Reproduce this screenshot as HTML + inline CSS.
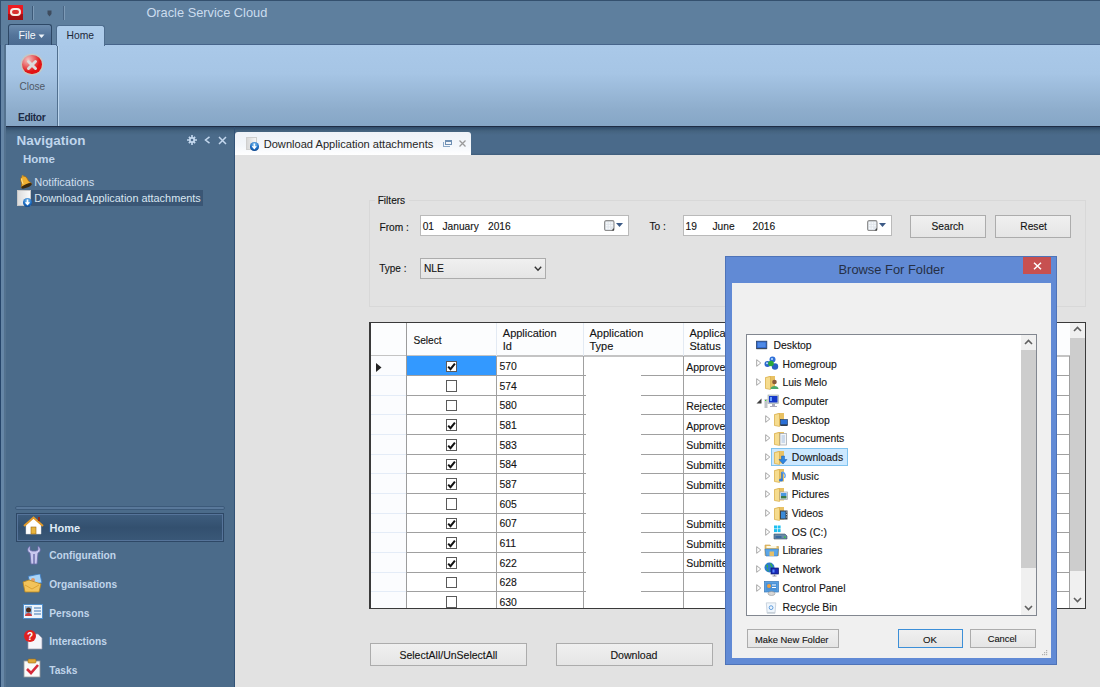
<!DOCTYPE html>
<html><head><meta charset="utf-8">
<style>
*{margin:0;padding:0;box-sizing:border-box}
html,body{width:1100px;height:687px;overflow:hidden;background:#e2e2e2;font-family:"Liberation Sans",sans-serif;font-size:11px;color:#111}
.a{position:absolute}
.t{position:absolute;white-space:nowrap;line-height:1}
</style></head><body>
<div class="a" style="left:0.00px;top:0.00px;width:1100.00px;height:45.00px;background:#5e7f9e;border-top:1px solid #34506e"></div>
<div class="a" style="left:0.00px;top:0.00px;width:1.00px;height:45.00px;background:#34506e"></div>
<div class="a" style="left:8.00px;top:5.00px;width:15.00px;height:15.00px;background:linear-gradient(#ee1c24 0%,#e3141b 58%,#a80f14 58%,#a10d12 100%)"></div>
<div class="a" style="left:9.80px;top:7.80px;width:11.40px;height:8.00px;border:2.2px solid #f6ece6;border-radius:4px;background:#d83030"></div>
<div class="a" style="left:32.00px;top:6.00px;width:1.00px;height:14.00px;background:#3d5a78;box-shadow:1px 0 0 #7d9ab6"></div>
<svg class="a" style="left:47.00px;top:10.00px" width="5" height="7"><path d="M0.5 0.5h4v3.5l-2 2.5l-2-2.5z" fill="#3e4c5e"/></svg>
<div class="a" style="left:63.00px;top:6.00px;width:1.00px;height:14.00px;background:#4a6684;box-shadow:1px 0 0 #7d9ab6"></div>
<div class="t" style="left:146.40px;top:7.16px;font-size:12.8px;color:#cbdcee;font-weight:400;">Oracle Service Cloud</div>
<div class="a" style="left:5.00px;top:44.00px;width:1095.00px;height:83.00px;background:linear-gradient(#aac9e9 0%,#a6c5e5 35%,#8eadcc 80%,#86a6c6 100%);border-top:1px solid #46648a;border-left:1px solid #3e5b7c;border-bottom:1px solid #1e2c44"></div>
<div class="a" style="left:8.00px;top:24.00px;width:44.00px;height:21.00px;border:1px solid #2d4866;border-bottom:none;border-radius:3px 3px 0 0;background:linear-gradient(#6c8cae,#54749a 50%,#4a6a90)"></div>
<div class="t" style="left:18.60px;top:30.03px;font-size:10.6px;color:#f4f8fc;font-weight:400;">File</div>
<svg class="a" style="left:37.50px;top:33.50px" width="7" height="5"><path d="M0.5 0.5h6l-3 3.5z" fill="#eef4fa"/></svg>
<div class="a" style="left:56.00px;top:24.50px;width:48.50px;height:21.50px;border:1px solid #4e6d8e;border-bottom:none;border-radius:3px 3px 0 0;background:linear-gradient(#aecdeb,#aac9e9)"></div>
<div class="t" style="left:66.50px;top:30.58px;font-size:10.3px;color:#1d2838;font-weight:400;">Home</div>
<div class="a" style="left:57.00px;top:46.00px;width:1.00px;height:80.00px;background:#51708f;box-shadow:1px 0 0 #bcd6ee"></div>
<div class="a" style="left:22.40px;top:54.50px;width:19.60px;height:19.60px;border-radius:50%;background:radial-gradient(circle at 30% 25%,#f4c0c0 0%,#ea7070 30%,#e01515 60%,#ee0808 100%);box-shadow:0 0 0 1.3px #c8c8c0"></div>
<svg class="a" style="left:22.40px;top:54.50px" width="20" height="20"><path d="M6.5 6.5 L13.5 13.5 M13.5 6.5 L6.5 13.5" stroke="#dcdcdc" stroke-width="3" stroke-linecap="round"/></svg>
<div class="t" style="left:19.40px;top:82.05px;font-size:10.1px;color:#4f5866;font-weight:400;">Close</div>
<div class="t" style="left:18.00px;top:113.17px;font-size:10.2px;color:#1c2a44;font-weight:700;letter-spacing:-0.35px">Editor</div>
<div class="a" style="left:0.00px;top:45.00px;width:6.00px;height:642.00px;background:linear-gradient(90deg,#26456a 0,#26456a 1px,#6686a6 1px,#6686a6 4.5px,#54728f 4.5px)"></div>
<div class="a" style="left:6.00px;top:127.00px;width:229.00px;height:560.00px;background:linear-gradient(#2f4a69 0px,#44637f 4px,#4b6b8a 8px)"></div>
<div class="a" style="left:234.00px;top:127.00px;width:1.00px;height:560.00px;background:#325276"></div>
<div class="t" style="left:16.60px;top:134.37px;font-size:13.5px;color:#bfd5ec;font-weight:700;">Navigation</div>
<svg class="a" style="left:187.00px;top:135.00px" width="10" height="10"><g fill="#c4d8ee"><circle cx="5" cy="5" r="3"/><path d="M4.2 0h1.6v10h-1.6zM0 4.2h10v1.6h-10z"/><path d="M1.3 2.4l1.1-1.1 6.3 6.3-1.1 1.1zM7.6 1.3l1.1 1.1-6.3 6.3-1.1-1.1z"/></g><circle cx="5" cy="5" r="1.3" fill="#4a6a8b"/></svg>
<svg class="a" style="left:204.00px;top:136.00px" width="7" height="8"><path d="M5.5 0.8 L1.5 4 L5.5 7.2" stroke="#c4d8ee" stroke-width="1.5" fill="none"/></svg>
<svg class="a" style="left:217.50px;top:136.00px" width="9" height="9"><path d="M1 1 L8 8 M8 1 L1 8" stroke="#c4d8ee" stroke-width="1.5"/></svg>
<div class="t" style="left:23.00px;top:154.07px;font-size:11.5px;color:#bfd5ec;font-weight:700;">Home</div>
<svg class="a" style="left:17.00px;top:174.00px" width="15" height="16"><g transform="rotate(-22 8 8)"><path d="M8 2 C5 2 4.5 5 4.5 8 L2.5 12 L13.5 12 L11.5 8 C11.5 5 11 2 8 2Z" fill="#f0b030" stroke="#a86a10" stroke-width="0.7"/><path d="M6 3.5 C5.5 5 5.5 7 5.5 9" stroke="#fde08a" stroke-width="1.2" fill="none"/><ellipse cx="8" cy="12.2" rx="5.5" ry="1.8" fill="#3a2a10"/><circle cx="8" cy="1.8" r="1" fill="#d89a20"/></g></svg>
<div class="t" style="left:34.30px;top:176.99px;font-size:11px;color:#d0dfee;font-weight:400;">Notifications</div>
<div class="a" style="left:17.00px;top:190.00px;width:186.00px;height:16.00px;background:#3a5675"></div>
<div class="a" style="left:17.00px;top:190.00px;width:14.00px;height:16.00px;background:linear-gradient(90deg,#dcdcdc,#fafafa);border:1px solid #c8c8c8"></div>
<div class="a" style="left:22.50px;top:198.00px;width:9.00px;height:9.00px;border-radius:50%;background:radial-gradient(circle at 50% 30%,#8ccaf5,#1a6bc2 55%,#082a60)"></div>
<svg class="a" style="left:22.50px;top:198.00px" width="9" height="9"><path d="M4.5 1.5v4.5M2.6 4.2L4.5 6.5L6.4 4.2" stroke="#fff" stroke-width="1.4" fill="none"/></svg>
<div class="t" style="left:34.30px;top:193.07px;font-size:10.9px;color:#d9e6f2;font-weight:400;">Download Application attachments</div>
<div class="a" style="left:15.00px;top:506.00px;width:210.00px;height:4.00px;background:#59789a;border:1px solid #3c5a7a;border-radius:2px"></div>
<div class="a" style="left:16.00px;top:513.00px;width:208.00px;height:28.60px;border:1px solid #2e4866;box-shadow:inset 0 0 0 1px #56749a;background:linear-gradient(#3e5d7e,#33506f 50%,#3a5878)"></div>
<svg class="a" style="left:23.00px;top:516.00px" width="21" height="19"><path d="M3 9 L10.5 2 L18 9 L18 18 L3 18Z" fill="#fff" stroke="#d8d8d8" stroke-width="0.5"/><path d="M1 10 L10.5 1.5 L20 10" stroke="#e29a2a" stroke-width="2" fill="none"/><rect x="8" y="11" width="5" height="7" fill="#e8b43c" stroke="#9b6a14" stroke-width="0.6"/><rect x="15" y="1" width="2" height="4" fill="#8a2b1a"/></svg>
<div class="t" style="left:49.50px;top:523.19px;font-size:11px;color:#dfeaf5;font-weight:700;">Home</div>
<svg class="a" style="left:26.00px;top:545.00px" width="16" height="20"><path d="M4 1 C1 3 1 7 4 8 L5 19 L11 19 L12 8 C15 7 15 3 12 1 L12 5 L10 6 L6 6 L4 5Z" fill="#c9c8ef" stroke="#6a6aa8" stroke-width="0.8"/><rect x="7.3" y="9" width="1.4" height="10" fill="#6a6aa8"/></svg>
<div class="t" style="left:49.20px;top:551.47px;font-size:10.2px;color:#c0d5ea;font-weight:700;">Configuration</div>
<svg class="a" style="left:22.00px;top:574.00px" width="21" height="19"><rect x="7" y="1" width="12" height="9" fill="#a9d4f8" stroke="#3d7cc0" stroke-width="0.8" transform="rotate(-12 13 5)"/><circle cx="11" cy="6" r="2" fill="#e09a6a"/><path d="M1 8 L7 6 L19 10 L17 18 L3 18Z" fill="#f2c35a" stroke="#b9861e" stroke-width="0.8"/><path d="M3 11 L10 15 L17 11" stroke="#d69a2a" stroke-width="0.8" fill="none"/></svg>
<div class="t" style="left:49.20px;top:580.05px;font-size:10.1px;color:#c0d5ea;font-weight:700;">Organisations</div>
<svg class="a" style="left:23.00px;top:603.50px" width="20" height="15"><rect x="0.5" y="0.5" width="19" height="14" fill="#eef4fb" stroke="#4f8dc9"/><rect x="2" y="2" width="7" height="10" fill="#8fb7df"/><circle cx="5.5" cy="6" r="2.5" fill="#4a2a18"/><path d="M2 12 C2 8 9 8 9 12Z" fill="#d43c3c"/><path d="M11 4h7M11 7h7M11 10h7" stroke="#3c76b4" stroke-width="1.2"/></svg>
<div class="t" style="left:49.20px;top:609.17px;font-size:10.2px;color:#c0d5ea;font-weight:700;">Persons</div>
<svg class="a" style="left:22.50px;top:630.00px" width="20" height="20"><path d="M5 4 L15 4 L19 8 L19 19 L5 19Z" fill="#f5f5fb" stroke="#9a9aaa" stroke-width="0.7"/><circle cx="7" cy="6" r="6" fill="#e02020"/><text x="7" y="10" font-size="10" font-weight="bold" fill="#fff" text-anchor="middle" font-family="Liberation Sans">?</text></svg>
<div class="t" style="left:49.20px;top:637.17px;font-size:10.2px;color:#c0d5ea;font-weight:700;">Interactions</div>
<svg class="a" style="left:23.00px;top:658.30px" width="19" height="20"><rect x="1" y="3" width="16" height="16" fill="#fafafa" stroke="#999" stroke-width="0.8"/><rect x="5" y="1" width="8" height="4" rx="1" fill="#e0a838" stroke="#9b6a14" stroke-width="0.6"/><path d="M4 11 L8 15 L15 7" stroke="#d62a3a" stroke-width="2.6" fill="none"/></svg>
<div class="t" style="left:49.20px;top:665.67px;font-size:10.2px;color:#c0d5ea;font-weight:700;">Tasks</div>
<div class="a" style="left:235.00px;top:127.00px;width:865.00px;height:28.00px;background:linear-gradient(#2f4a69 0px,#44637f 4px,#4a6a8a 8px,#4a6a8a 26px,#3e5c7b 28px)"></div>
<div class="a" style="left:235.00px;top:155.00px;width:865.00px;height:532.00px;background:#e2e2e2"></div>
<div class="a" style="left:235.00px;top:132.00px;width:236.00px;height:23.00px;border-radius:3px 3px 0 0;background:linear-gradient(#eef2f8,#f4f7fb 60%,#ffffff)"></div>
<div class="a" style="left:246.00px;top:137.00px;width:11.00px;height:13.00px;background:linear-gradient(90deg,#d8d8d8,#f6f6f6);border:1px solid #cfcfcf"></div>
<div class="a" style="left:250.00px;top:142.00px;width:8.50px;height:8.50px;border-radius:50%;background:radial-gradient(circle at 50% 30%,#8ccaf5,#1a6bc2 55%,#082a60)"></div>
<svg class="a" style="left:250.00px;top:142.00px" width="9" height="9"><path d="M4.3 1.5v4.5M2.4 4.2L4.3 6.5L6.2 4.2" stroke="#fff" stroke-width="1.3" fill="none"/></svg>
<div class="t" style="left:263.70px;top:138.90px;font-size:11.1px;color:#262626;font-weight:400;">Download Application attachments</div>
<div class="a" style="left:445.00px;top:140.00px;width:7.00px;height:5.00px;border:1.5px solid #6e8fb3;border-top-width:2px"></div>
<div class="a" style="left:443.00px;top:142.00px;width:7.00px;height:5.00px;border:1.5px solid #8aa8c8;border-top:none;border-right:none"></div>
<svg class="a" style="left:459.00px;top:140.00px" width="7" height="7"><path d="M0.5 0.5 L6.5 6.5 M6.5 0.5 L0.5 6.5" stroke="#9a9a9a" stroke-width="1.3"/></svg>
<div class="a" style="left:369.00px;top:200.00px;width:717.00px;height:107.00px;border:1px solid #d8d8d8"></div>
<div class="a" style="left:375.00px;top:193.00px;width:34.00px;height:12.00px;background:#e2e2e2"></div>
<div class="t" style="left:377.70px;top:196.15px;font-size:10.1px;color:#141414;font-weight:400;;-webkit-text-stroke:0.12px #141414">Filters</div>
<div class="t" style="left:379.50px;top:222.67px;font-size:10.2px;color:#141414;font-weight:400;;-webkit-text-stroke:0.12px #141414">From :</div>
<div class="a" style="left:420.00px;top:215.00px;width:209.00px;height:21.00px;background:#fff;border:1px solid #bababa"></div>
<div class="t" style="left:422.70px;top:221.57px;font-size:10.2px;color:#141414;font-weight:400;;-webkit-text-stroke:0.12px #141414">01</div>
<div class="t" style="left:442.50px;top:221.57px;font-size:10.2px;color:#141414;font-weight:400;;-webkit-text-stroke:0.12px #141414">January</div>
<div class="t" style="left:488.00px;top:221.57px;font-size:10.2px;color:#141414;font-weight:400;;-webkit-text-stroke:0.12px #141414">2016</div>
<svg class="a" style="left:603.80px;top:220.00px" width="11" height="11"><rect x="0.6" y="0.6" width="9.4" height="10" rx="1.6" fill="#dfe4ea" stroke="#8e8e8e" stroke-width="1.1"/><g fill="#f8fafc"><rect x="2" y="2.2" width="1.6" height="1.6"/><rect x="4.6" y="2.2" width="1.6" height="1.6"/><rect x="7.2" y="2.2" width="1.6" height="1.6"/><rect x="2" y="4.8" width="1.6" height="1.6"/><rect x="4.6" y="4.8" width="1.6" height="1.6"/><rect x="7.2" y="4.8" width="1.6" height="1.6"/><rect x="2" y="7.4" width="1.6" height="1.6"/><rect x="4.6" y="7.4" width="1.6" height="1.6"/></g><path d="M7.5 10.5 L10 8 L10 10.5Z" fill="#444"/></svg>
<svg class="a" style="left:615.80px;top:223.00px" width="7" height="4"><path d="M0 0h7l-3.5 4z" fill="#3c5a86"/></svg>
<div class="t" style="left:649.50px;top:222.37px;font-size:10.2px;color:#141414;font-weight:400;;-webkit-text-stroke:0.12px #141414">To :</div>
<div class="a" style="left:683.00px;top:215.00px;width:209.00px;height:21.00px;background:#fff;border:1px solid #bababa"></div>
<div class="t" style="left:685.50px;top:221.57px;font-size:10.2px;color:#141414;font-weight:400;;-webkit-text-stroke:0.12px #141414">19</div>
<div class="t" style="left:712.50px;top:221.57px;font-size:10.2px;color:#141414;font-weight:400;;-webkit-text-stroke:0.12px #141414">June</div>
<div class="t" style="left:752.50px;top:221.57px;font-size:10.2px;color:#141414;font-weight:400;;-webkit-text-stroke:0.12px #141414">2016</div>
<svg class="a" style="left:866.80px;top:220.00px" width="11" height="11"><rect x="0.6" y="0.6" width="9.4" height="10" rx="1.6" fill="#dfe4ea" stroke="#8e8e8e" stroke-width="1.1"/><g fill="#f8fafc"><rect x="2" y="2.2" width="1.6" height="1.6"/><rect x="4.6" y="2.2" width="1.6" height="1.6"/><rect x="7.2" y="2.2" width="1.6" height="1.6"/><rect x="2" y="4.8" width="1.6" height="1.6"/><rect x="4.6" y="4.8" width="1.6" height="1.6"/><rect x="7.2" y="4.8" width="1.6" height="1.6"/><rect x="2" y="7.4" width="1.6" height="1.6"/><rect x="4.6" y="7.4" width="1.6" height="1.6"/></g><path d="M7.5 10.5 L10 8 L10 10.5Z" fill="#444"/></svg>
<svg class="a" style="left:878.80px;top:223.00px" width="7" height="4"><path d="M0 0h7l-3.5 4z" fill="#3c5a86"/></svg>
<div class="a" style="left:910.00px;top:215.00px;width:76.00px;height:23.00px;background:linear-gradient(#f0f0f0,#e5e5e5);border:1px solid #acacac"></div>
<div class="t" style="left:931.50px;top:222.37px;font-size:10.2px;color:#141414;font-weight:400;;-webkit-text-stroke:0.12px #141414">Search</div>
<div class="a" style="left:995.00px;top:215.00px;width:76.00px;height:23.00px;background:linear-gradient(#f0f0f0,#e5e5e5);border:1px solid #acacac"></div>
<div class="t" style="left:1020.30px;top:222.37px;font-size:10.2px;color:#141414;font-weight:400;;-webkit-text-stroke:0.12px #141414">Reset</div>
<div class="t" style="left:379.20px;top:264.14px;font-size:10px;color:#141414;font-weight:400;;-webkit-text-stroke:0.12px #141414">Type :</div>
<div class="a" style="left:420.00px;top:258.00px;width:126.00px;height:21.00px;border:1px solid #acacac;background:linear-gradient(#f0f0f0,#e5e5e5)"></div>
<div class="t" style="left:424.00px;top:263.97px;font-size:10.2px;color:#141414;font-weight:400;;-webkit-text-stroke:0.12px #141414">NLE</div>
<svg class="a" style="left:534.00px;top:266.00px" width="8" height="6"><path d="M0.8 0.8 L4 4.2 L7.2 0.8" stroke="#333" stroke-width="1.4" fill="none"/></svg>
<div class="a" style="left:369.00px;top:322.00px;width:717.00px;height:287.00px;background:#fff;border:1px solid #3a3a3a;border-left-width:2px"></div>
<div class="a" style="left:371.00px;top:323.00px;width:714.00px;height:33.50px;background:#fcfdfe"></div>
<div class="a" style="left:371.00px;top:355.00px;width:714.00px;height:1.60px;background:#c4c4c4"></div>
<div class="a" style="left:495.60px;top:323.00px;width:1.00px;height:33.50px;background:#e3eaf3"></div>
<div class="a" style="left:582.60px;top:323.00px;width:1.00px;height:33.50px;background:#e3eaf3"></div>
<div class="a" style="left:682.60px;top:323.00px;width:1.00px;height:33.50px;background:#e3eaf3"></div>
<div class="a" style="left:406.20px;top:323.00px;width:1.00px;height:285.00px;background:#9c9c9c"></div>
<div class="a" style="left:371.00px;top:356.30px;width:35.20px;height:251.70px;background:#fbfcfe"></div>
<div class="a" style="left:495.60px;top:356.30px;width:1.00px;height:251.70px;background:#a0a0a0"></div>
<div class="a" style="left:582.60px;top:356.30px;width:1.00px;height:251.70px;background:#a0a0a0"></div>
<div class="a" style="left:682.60px;top:356.30px;width:1.00px;height:251.70px;background:#a0a0a0"></div>
<div class="a" style="left:1069.40px;top:356.30px;width:1.00px;height:251.70px;background:#a0a0a0"></div>
<div class="a" style="left:406.20px;top:375.16px;width:179.40px;height:1.00px;background:#a0a0a0"></div>
<div class="a" style="left:640.50px;top:375.16px;width:428.90px;height:1.00px;background:#a0a0a0"></div>
<div class="a" style="left:371.00px;top:375.16px;width:35.20px;height:1.00px;background:#e4ecf7"></div>
<div class="a" style="left:407.20px;top:356.30px;width:88.40px;height:18.86px;background:#3399ff"></div>
<svg class="a" style="left:376.00px;top:362.80px" width="6" height="9"><path d="M0 0 L5.5 4.5 L0 9Z" fill="#222"/></svg>
<div class="a" style="left:445.50px;top:360.50px;width:11.50px;height:11.50px;background:#fff;border:1px solid #5a5a5a"></div>
<svg class="a" style="left:446.00px;top:361.00px" width="11" height="11"><path d="M2.2 5.6 L4.5 8.2 L8.9 2.6" stroke="#111" stroke-width="2" fill="none"/></svg>
<div class="t" style="left:499.50px;top:361.90px;font-size:10.4px;color:#141414;font-weight:400;;-webkit-text-stroke:0.12px #141414">570</div>
<div class="t" style="left:686.20px;top:361.81px;font-size:10.5px;color:#141414;font-weight:400;;-webkit-text-stroke:0.12px #141414">Approve</div>
<div class="a" style="left:406.20px;top:394.82px;width:179.40px;height:1.00px;background:#a0a0a0"></div>
<div class="a" style="left:640.50px;top:394.82px;width:428.90px;height:1.00px;background:#a0a0a0"></div>
<div class="a" style="left:371.00px;top:394.82px;width:35.20px;height:1.00px;background:#e4ecf7"></div>
<div class="a" style="left:445.50px;top:380.16px;width:11.50px;height:11.50px;background:#fff;border:1px solid #5a5a5a"></div>
<div class="t" style="left:499.50px;top:381.56px;font-size:10.4px;color:#141414;font-weight:400;;-webkit-text-stroke:0.12px #141414">574</div>
<div class="a" style="left:406.20px;top:414.48px;width:179.40px;height:1.00px;background:#a0a0a0"></div>
<div class="a" style="left:640.50px;top:414.48px;width:428.90px;height:1.00px;background:#a0a0a0"></div>
<div class="a" style="left:371.00px;top:414.48px;width:35.20px;height:1.00px;background:#e4ecf7"></div>
<div class="a" style="left:445.50px;top:399.82px;width:11.50px;height:11.50px;background:#fff;border:1px solid #5a5a5a"></div>
<div class="t" style="left:499.50px;top:401.22px;font-size:10.4px;color:#141414;font-weight:400;;-webkit-text-stroke:0.12px #141414">580</div>
<div class="t" style="left:686.20px;top:401.13px;font-size:10.5px;color:#141414;font-weight:400;;-webkit-text-stroke:0.12px #141414">Rejected</div>
<div class="a" style="left:406.20px;top:434.14px;width:179.40px;height:1.00px;background:#a0a0a0"></div>
<div class="a" style="left:640.50px;top:434.14px;width:428.90px;height:1.00px;background:#a0a0a0"></div>
<div class="a" style="left:371.00px;top:434.14px;width:35.20px;height:1.00px;background:#e4ecf7"></div>
<div class="a" style="left:445.50px;top:419.48px;width:11.50px;height:11.50px;background:#fff;border:1px solid #5a5a5a"></div>
<svg class="a" style="left:446.00px;top:419.98px" width="11" height="11"><path d="M2.2 5.6 L4.5 8.2 L8.9 2.6" stroke="#111" stroke-width="2" fill="none"/></svg>
<div class="t" style="left:499.50px;top:420.88px;font-size:10.4px;color:#141414;font-weight:400;;-webkit-text-stroke:0.12px #141414">581</div>
<div class="t" style="left:686.20px;top:420.79px;font-size:10.5px;color:#141414;font-weight:400;;-webkit-text-stroke:0.12px #141414">Approve</div>
<div class="a" style="left:406.20px;top:453.80px;width:179.40px;height:1.00px;background:#a0a0a0"></div>
<div class="a" style="left:640.50px;top:453.80px;width:428.90px;height:1.00px;background:#a0a0a0"></div>
<div class="a" style="left:371.00px;top:453.80px;width:35.20px;height:1.00px;background:#e4ecf7"></div>
<div class="a" style="left:445.50px;top:439.14px;width:11.50px;height:11.50px;background:#fff;border:1px solid #5a5a5a"></div>
<svg class="a" style="left:446.00px;top:439.64px" width="11" height="11"><path d="M2.2 5.6 L4.5 8.2 L8.9 2.6" stroke="#111" stroke-width="2" fill="none"/></svg>
<div class="t" style="left:499.50px;top:440.54px;font-size:10.4px;color:#141414;font-weight:400;;-webkit-text-stroke:0.12px #141414">583</div>
<div class="t" style="left:686.20px;top:440.45px;font-size:10.5px;color:#141414;font-weight:400;;-webkit-text-stroke:0.12px #141414">Submitte</div>
<div class="a" style="left:406.20px;top:473.46px;width:179.40px;height:1.00px;background:#a0a0a0"></div>
<div class="a" style="left:640.50px;top:473.46px;width:428.90px;height:1.00px;background:#a0a0a0"></div>
<div class="a" style="left:371.00px;top:473.46px;width:35.20px;height:1.00px;background:#e4ecf7"></div>
<div class="a" style="left:445.50px;top:458.80px;width:11.50px;height:11.50px;background:#fff;border:1px solid #5a5a5a"></div>
<svg class="a" style="left:446.00px;top:459.30px" width="11" height="11"><path d="M2.2 5.6 L4.5 8.2 L8.9 2.6" stroke="#111" stroke-width="2" fill="none"/></svg>
<div class="t" style="left:499.50px;top:460.20px;font-size:10.4px;color:#141414;font-weight:400;;-webkit-text-stroke:0.12px #141414">584</div>
<div class="t" style="left:686.20px;top:460.11px;font-size:10.5px;color:#141414;font-weight:400;;-webkit-text-stroke:0.12px #141414">Submitte</div>
<div class="a" style="left:406.20px;top:493.12px;width:179.40px;height:1.00px;background:#a0a0a0"></div>
<div class="a" style="left:640.50px;top:493.12px;width:428.90px;height:1.00px;background:#a0a0a0"></div>
<div class="a" style="left:371.00px;top:493.12px;width:35.20px;height:1.00px;background:#e4ecf7"></div>
<div class="a" style="left:445.50px;top:478.46px;width:11.50px;height:11.50px;background:#fff;border:1px solid #5a5a5a"></div>
<svg class="a" style="left:446.00px;top:478.96px" width="11" height="11"><path d="M2.2 5.6 L4.5 8.2 L8.9 2.6" stroke="#111" stroke-width="2" fill="none"/></svg>
<div class="t" style="left:499.50px;top:479.86px;font-size:10.4px;color:#141414;font-weight:400;;-webkit-text-stroke:0.12px #141414">587</div>
<div class="t" style="left:686.20px;top:479.77px;font-size:10.5px;color:#141414;font-weight:400;;-webkit-text-stroke:0.12px #141414">Submitte</div>
<div class="a" style="left:406.20px;top:512.78px;width:179.40px;height:1.00px;background:#a0a0a0"></div>
<div class="a" style="left:640.50px;top:512.78px;width:428.90px;height:1.00px;background:#a0a0a0"></div>
<div class="a" style="left:371.00px;top:512.78px;width:35.20px;height:1.00px;background:#e4ecf7"></div>
<div class="a" style="left:445.50px;top:498.12px;width:11.50px;height:11.50px;background:#fff;border:1px solid #5a5a5a"></div>
<div class="t" style="left:499.50px;top:499.52px;font-size:10.4px;color:#141414;font-weight:400;;-webkit-text-stroke:0.12px #141414">605</div>
<div class="a" style="left:406.20px;top:532.44px;width:179.40px;height:1.00px;background:#a0a0a0"></div>
<div class="a" style="left:640.50px;top:532.44px;width:428.90px;height:1.00px;background:#a0a0a0"></div>
<div class="a" style="left:371.00px;top:532.44px;width:35.20px;height:1.00px;background:#e4ecf7"></div>
<div class="a" style="left:445.50px;top:517.78px;width:11.50px;height:11.50px;background:#fff;border:1px solid #5a5a5a"></div>
<svg class="a" style="left:446.00px;top:518.28px" width="11" height="11"><path d="M2.2 5.6 L4.5 8.2 L8.9 2.6" stroke="#111" stroke-width="2" fill="none"/></svg>
<div class="t" style="left:499.50px;top:519.18px;font-size:10.4px;color:#141414;font-weight:400;;-webkit-text-stroke:0.12px #141414">607</div>
<div class="t" style="left:686.20px;top:519.09px;font-size:10.5px;color:#141414;font-weight:400;;-webkit-text-stroke:0.12px #141414">Submitte</div>
<div class="a" style="left:406.20px;top:552.10px;width:179.40px;height:1.00px;background:#a0a0a0"></div>
<div class="a" style="left:640.50px;top:552.10px;width:428.90px;height:1.00px;background:#a0a0a0"></div>
<div class="a" style="left:371.00px;top:552.10px;width:35.20px;height:1.00px;background:#e4ecf7"></div>
<div class="a" style="left:445.50px;top:537.44px;width:11.50px;height:11.50px;background:#fff;border:1px solid #5a5a5a"></div>
<svg class="a" style="left:446.00px;top:537.94px" width="11" height="11"><path d="M2.2 5.6 L4.5 8.2 L8.9 2.6" stroke="#111" stroke-width="2" fill="none"/></svg>
<div class="t" style="left:499.50px;top:538.84px;font-size:10.4px;color:#141414;font-weight:400;;-webkit-text-stroke:0.12px #141414">611</div>
<div class="t" style="left:686.20px;top:538.75px;font-size:10.5px;color:#141414;font-weight:400;;-webkit-text-stroke:0.12px #141414">Submitte</div>
<div class="a" style="left:406.20px;top:571.76px;width:179.40px;height:1.00px;background:#a0a0a0"></div>
<div class="a" style="left:640.50px;top:571.76px;width:428.90px;height:1.00px;background:#a0a0a0"></div>
<div class="a" style="left:371.00px;top:571.76px;width:35.20px;height:1.00px;background:#e4ecf7"></div>
<div class="a" style="left:445.50px;top:557.10px;width:11.50px;height:11.50px;background:#fff;border:1px solid #5a5a5a"></div>
<svg class="a" style="left:446.00px;top:557.60px" width="11" height="11"><path d="M2.2 5.6 L4.5 8.2 L8.9 2.6" stroke="#111" stroke-width="2" fill="none"/></svg>
<div class="t" style="left:499.50px;top:558.50px;font-size:10.4px;color:#141414;font-weight:400;;-webkit-text-stroke:0.12px #141414">622</div>
<div class="t" style="left:686.20px;top:558.41px;font-size:10.5px;color:#141414;font-weight:400;;-webkit-text-stroke:0.12px #141414">Submitte</div>
<div class="a" style="left:406.20px;top:591.42px;width:179.40px;height:1.00px;background:#a0a0a0"></div>
<div class="a" style="left:640.50px;top:591.42px;width:428.90px;height:1.00px;background:#a0a0a0"></div>
<div class="a" style="left:371.00px;top:591.42px;width:35.20px;height:1.00px;background:#e4ecf7"></div>
<div class="a" style="left:445.50px;top:576.76px;width:11.50px;height:11.50px;background:#fff;border:1px solid #5a5a5a"></div>
<div class="t" style="left:499.50px;top:578.16px;font-size:10.4px;color:#141414;font-weight:400;;-webkit-text-stroke:0.12px #141414">628</div>
<div class="a" style="left:445.50px;top:596.42px;width:11.50px;height:11.50px;background:#fff;border:1px solid #5a5a5a"></div>
<div class="t" style="left:499.50px;top:597.82px;font-size:10.4px;color:#141414;font-weight:400;;-webkit-text-stroke:0.12px #141414">630</div>
<div class="t" style="left:413.40px;top:335.77px;font-size:10.2px;color:#141414;font-weight:400;;-webkit-text-stroke:0.12px #141414">Select</div>
<div class="t" style="left:502.80px;top:328.49px;font-size:11px;color:#141414;font-weight:400;;-webkit-text-stroke:0.12px #141414">Application</div>
<div class="t" style="left:502.80px;top:341.29px;font-size:11px;color:#141414;font-weight:400;;-webkit-text-stroke:0.12px #141414">Id</div>
<div class="t" style="left:589.50px;top:328.49px;font-size:11px;color:#141414;font-weight:400;;-webkit-text-stroke:0.12px #141414">Application</div>
<div class="t" style="left:589.50px;top:341.29px;font-size:11px;color:#141414;font-weight:400;;-webkit-text-stroke:0.12px #141414">Type</div>
<div class="t" style="left:689.50px;top:328.49px;font-size:11px;color:#141414;font-weight:400;;-webkit-text-stroke:0.12px #141414">Applica</div>
<div class="t" style="left:689.50px;top:341.29px;font-size:11px;color:#141414;font-weight:400;;-webkit-text-stroke:0.12px #141414">Status</div>
<div class="a" style="left:1070.40px;top:323.00px;width:15.00px;height:285.00px;background:#f0f0f0"></div>
<div class="a" style="left:1070.40px;top:337.50px;width:15.00px;height:233.20px;background:#cdcdcd"></div>
<svg class="a" style="left:1073.00px;top:326.00px" width="9" height="6"><path d="M1 5 L4.5 1.5 L8 5" stroke="#606060" stroke-width="1.6" fill="none"/></svg>
<svg class="a" style="left:1073.00px;top:597.00px" width="9" height="6"><path d="M1 1 L4.5 4.5 L8 1" stroke="#606060" stroke-width="1.6" fill="none"/></svg>
<div class="a" style="left:370.00px;top:643.00px;width:157.00px;height:22.50px;background:linear-gradient(#f0f0f0,#e5e5e5);border:1px solid #acacac"></div>
<div class="t" style="left:399.40px;top:649.91px;font-size:10.5px;color:#141414;font-weight:400;;-webkit-text-stroke:0.12px #141414">SelectAll/UnSelectAll</div>
<div class="a" style="left:556.40px;top:643.00px;width:156.30px;height:22.50px;background:linear-gradient(#f0f0f0,#e5e5e5);border:1px solid #acacac"></div>
<div class="t" style="left:610.40px;top:649.83px;font-size:10.6px;color:#141414;font-weight:400;;-webkit-text-stroke:0.12px #141414">Download</div>
<div class="a" style="left:725.00px;top:255.50px;width:332.00px;height:409.80px;background:#618ad5;border:1px solid #4e73b8"></div>
<div class="a" style="left:732.00px;top:283.00px;width:318.60px;height:375.00px;background:#f0f0f0"></div>
<div class="t" style="left:838.50px;top:263.68px;font-size:12.9px;color:#263046;font-weight:400;">Browse For Folder</div>
<div class="a" style="left:1023.40px;top:256.60px;width:27.40px;height:17.40px;background:#c75050"></div>
<svg class="a" style="left:1033.00px;top:261.50px" width="9" height="8"><path d="M1 0.8 L8 7.2 M8 0.8 L1 7.2" stroke="#fff" stroke-width="1.5"/></svg>
<div class="a" style="left:746.00px;top:333.60px;width:290.50px;height:282.10px;background:#fff;border:1px solid #828790"></div>
<div class="a" style="left:1021.40px;top:334.60px;width:14.20px;height:280.20px;background:#f0f0f0"></div>
<div class="a" style="left:1021.40px;top:349.90px;width:14.20px;height:218.40px;background:#cdcdcd"></div>
<svg class="a" style="left:1024.00px;top:339.00px" width="9" height="6"><path d="M1 5 L4.5 1.5 L8 5" stroke="#606060" stroke-width="1.6" fill="none"/></svg>
<svg class="a" style="left:1024.00px;top:605.00px" width="9" height="6"><path d="M1 1 L4.5 4.5 L8 1" stroke="#606060" stroke-width="1.6" fill="none"/></svg>
<svg class="a" style="left:755.0px;top:339.90px" width="14" height="12" viewBox="0 0 15 15"><rect x="0.5" y="1.5" width="13" height="9" fill="#2d62c8" stroke="#27446e"/><rect x="2" y="3" width="10" height="6" fill="#4f8ae6"/><rect x="0.5" y="10" width="13" height="1.5" fill="#3a4a5e"/></svg>
<div class="t" style="left:773.50px;top:340.90px;font-size:10.4px;color:#141414;font-weight:400;;-webkit-text-stroke:0.12px #141414">Desktop</div>
<svg class="a" style="left:755.50px;top:359.39px" width="6" height="8"><path d="M0.7 0.7 L4.8 4 L0.7 7.3Z" fill="none" stroke="#a6a6a6" stroke-width="1"/></svg>
<svg class="a" style="left:763.6px;top:356.29px" width="15" height="15" viewBox="0 0 15 15"><circle cx="8.5" cy="3.5" r="3" fill="#2f6fd8"/><circle cx="3.5" cy="8" r="3" fill="#2b66cc"/><circle cx="11" cy="10.5" r="3.2" fill="#2a5fc4"/><circle cx="7" cy="7.5" r="2.8" fill="#2aa83c"/><circle cx="8" cy="3" r="1" fill="#bfe0ff"/><circle cx="3" cy="7.3" r="1" fill="#bfe0ff"/></svg>
<div class="t" style="left:782.50px;top:359.59px;font-size:10.4px;color:#141414;font-weight:400;;-webkit-text-stroke:0.12px #141414">Homegroup</div>
<svg class="a" style="left:755.50px;top:378.08px" width="6" height="8"><path d="M0.7 0.7 L4.8 4 L0.7 7.3Z" fill="none" stroke="#a6a6a6" stroke-width="1"/></svg>
<svg class="a" style="left:763.6px;top:374.98px" width="15" height="15" viewBox="0 0 15 15"><path d="M1.5 2.5 L6 1 L11 1 L11 13.5 L1.5 13.5Z" fill="#e8c164"/><path d="M1.5 2.5 L6.5 1.5 L6.5 14.5 L1.5 13.5Z" fill="#f6dc8e" stroke="#d4a640" stroke-width="0.6"/><circle cx="10.5" cy="7" r="2.3" fill="#8a5a3a"/><path d="M6.5 14 C6.5 10 14.5 10 14.5 14Z" fill="#4aa86a"/></svg>
<div class="t" style="left:782.50px;top:378.28px;font-size:10.4px;color:#141414;font-weight:400;;-webkit-text-stroke:0.12px #141414">Luis Melo</div>
<svg class="a" style="left:755.50px;top:397.67px" width="6" height="6"><path d="M5.5 0.5 L5.5 5.5 L0.5 5.5Z" fill="#404040"/></svg>
<svg class="a" style="left:763.6px;top:393.67px" width="15" height="15" viewBox="0 0 15 15"><rect x="0.5" y="5" width="3" height="9" fill="#c0c4c8"/><rect x="1" y="6" width="1.2" height="1" fill="#3c3"/><rect x="4" y="1" width="10.5" height="8.5" fill="#d0d4d8" stroke="#9aa" stroke-width="0.6"/><rect x="5" y="2" width="8.5" height="6.5" fill="#1438c8"/><rect x="6" y="3" width="2" height="4" fill="#6aa0ff"/><rect x="8" y="10" width="3" height="2" fill="#aab"/><rect x="6" y="12" width="7" height="1" fill="#aab"/></svg>
<div class="t" style="left:782.50px;top:396.97px;font-size:10.4px;color:#141414;font-weight:400;;-webkit-text-stroke:0.12px #141414">Computer</div>
<svg class="a" style="left:764.60px;top:415.46px" width="6" height="8"><path d="M0.7 0.7 L4.8 4 L0.7 7.3Z" fill="none" stroke="#a6a6a6" stroke-width="1"/></svg>
<svg class="a" style="left:773.3px;top:412.36px" width="15" height="15" viewBox="0 0 15 15"><path d="M1.5 2.5 L6 1 L11 1 L11 13.5 L1.5 13.5Z" fill="#e8c164"/><path d="M1.5 2.5 L6.5 1.5 L6.5 14.5 L1.5 13.5Z" fill="#f6dc8e" stroke="#d4a640" stroke-width="0.6"/><rect x="7.5" y="7.5" width="7" height="5.5" fill="#2a6fd6" stroke="#24446e" stroke-width="0.7"/><rect x="7.5" y="12.5" width="7" height="1.5" fill="#2e3c50"/></svg>
<div class="t" style="left:791.70px;top:415.66px;font-size:10.4px;color:#141414;font-weight:400;;-webkit-text-stroke:0.12px #141414">Desktop</div>
<svg class="a" style="left:764.60px;top:434.15px" width="6" height="8"><path d="M0.7 0.7 L4.8 4 L0.7 7.3Z" fill="none" stroke="#a6a6a6" stroke-width="1"/></svg>
<svg class="a" style="left:773.3px;top:431.05px" width="15" height="15" viewBox="0 0 15 15"><path d="M1.5 2.5 L6 1 L11 1 L11 13.5 L1.5 13.5Z" fill="#e8c164"/><path d="M1.5 2.5 L6.5 1.5 L6.5 14.5 L1.5 13.5Z" fill="#f6dc8e" stroke="#d4a640" stroke-width="0.6"/><rect x="7" y="2.5" width="6.5" height="11.5" fill="#f4f6f8" stroke="#9aa0a8" stroke-width="0.7"/><path d="M8.5 5h3.5M8.5 7h3.5M8.5 9h3.5M8.5 11h3.5" stroke="#8fb0d8" stroke-width="0.8"/></svg>
<div class="t" style="left:791.70px;top:434.35px;font-size:10.4px;color:#141414;font-weight:400;;-webkit-text-stroke:0.12px #141414">Documents</div>
<div class="a" style="left:771.00px;top:448.24px;width:76.60px;height:17.90px;background:#cce8ff;border:1px solid #7fc3f0"></div>
<svg class="a" style="left:764.60px;top:452.84px" width="6" height="8"><path d="M0.7 0.7 L4.8 4 L0.7 7.3Z" fill="none" stroke="#a6a6a6" stroke-width="1"/></svg>
<svg class="a" style="left:773.3px;top:449.74px" width="15" height="15" viewBox="0 0 15 15"><path d="M1.5 2.5 L6 1 L11 1 L11 13.5 L1.5 13.5Z" fill="#e8c164"/><path d="M1.5 2.5 L6.5 1.5 L6.5 14.5 L1.5 13.5Z" fill="#f6dc8e" stroke="#d4a640" stroke-width="0.6"/><path d="M8.5 6 L11.5 6 L11.5 9.5 L14 9.5 L10 14 L6 9.5 L8.5 9.5Z" fill="#2c86e0" stroke="#1a5ab0" stroke-width="0.5"/></svg>
<div class="t" style="left:791.70px;top:453.04px;font-size:10.4px;color:#141414;font-weight:400;;-webkit-text-stroke:0.12px #141414">Downloads</div>
<svg class="a" style="left:764.60px;top:471.53px" width="6" height="8"><path d="M0.7 0.7 L4.8 4 L0.7 7.3Z" fill="none" stroke="#a6a6a6" stroke-width="1"/></svg>
<svg class="a" style="left:773.3px;top:468.43px" width="15" height="15" viewBox="0 0 15 15"><path d="M1.5 2.5 L6 1 L11 1 L11 13.5 L1.5 13.5Z" fill="#e8c164"/><path d="M1.5 2.5 L6.5 1.5 L6.5 14.5 L1.5 13.5Z" fill="#f6dc8e" stroke="#d4a640" stroke-width="0.6"/><path d="M9 4 L9 12" stroke="#2e7ad8" stroke-width="1.6"/><ellipse cx="8" cy="12" rx="2" ry="1.6" fill="#2e7ad8"/><path d="M9 4 C12 5 13 7 11.5 10" stroke="#5aa0f0" stroke-width="1.4" fill="none"/></svg>
<div class="t" style="left:791.70px;top:471.73px;font-size:10.4px;color:#141414;font-weight:400;;-webkit-text-stroke:0.12px #141414">Music</div>
<svg class="a" style="left:764.60px;top:490.22px" width="6" height="8"><path d="M0.7 0.7 L4.8 4 L0.7 7.3Z" fill="none" stroke="#a6a6a6" stroke-width="1"/></svg>
<svg class="a" style="left:773.3px;top:487.12px" width="15" height="15" viewBox="0 0 15 15"><path d="M1.5 2.5 L6 1 L11 1 L11 13.5 L1.5 13.5Z" fill="#e8c164"/><path d="M1.5 2.5 L6.5 1.5 L6.5 14.5 L1.5 13.5Z" fill="#f6dc8e" stroke="#d4a640" stroke-width="0.6"/><rect x="7" y="5" width="7.5" height="7.5" fill="#eef2f6" stroke="#9aa0a8" stroke-width="0.7"/><rect x="8" y="6" width="5.5" height="3" fill="#4a98e0"/><rect x="8" y="9" width="5.5" height="2.5" fill="#3a7a4a"/></svg>
<div class="t" style="left:791.70px;top:490.42px;font-size:10.4px;color:#141414;font-weight:400;;-webkit-text-stroke:0.12px #141414">Pictures</div>
<svg class="a" style="left:764.60px;top:508.91px" width="6" height="8"><path d="M0.7 0.7 L4.8 4 L0.7 7.3Z" fill="none" stroke="#a6a6a6" stroke-width="1"/></svg>
<svg class="a" style="left:773.3px;top:505.81px" width="15" height="15" viewBox="0 0 15 15"><path d="M1.5 2.5 L6 1 L11 1 L11 13.5 L1.5 13.5Z" fill="#e8c164"/><path d="M1.5 2.5 L6.5 1.5 L6.5 14.5 L1.5 13.5Z" fill="#f6dc8e" stroke="#d4a640" stroke-width="0.6"/><rect x="7" y="4.5" width="7.5" height="9" fill="#3a4048"/><rect x="8" y="5.5" width="4.5" height="7" fill="#3a8ad8"/><path d="M13.5 5.5v1M13.5 8v1M13.5 10.5v1" stroke="#ddd" stroke-width="0.8"/></svg>
<div class="t" style="left:791.70px;top:509.11px;font-size:10.4px;color:#141414;font-weight:400;;-webkit-text-stroke:0.12px #141414">Videos</div>
<svg class="a" style="left:764.60px;top:527.60px" width="6" height="8"><path d="M0.7 0.7 L4.8 4 L0.7 7.3Z" fill="none" stroke="#a6a6a6" stroke-width="1"/></svg>
<svg class="a" style="left:773.3px;top:524.50px" width="15" height="15" viewBox="0 0 15 15"><rect x="1" y="0.5" width="3" height="3" fill="#1ec0f0"/><rect x="4.6" y="0.5" width="3" height="3" fill="#1ec0f0"/><rect x="1" y="4.1" width="3" height="3" fill="#1ec0f0"/><rect x="4.6" y="4.1" width="3" height="3" fill="#1ec0f0"/><path d="M1 9 L12 9 L14 11 L14 14 L1 14Z" fill="#6a8aa8" stroke="#3a5068" stroke-width="0.6"/><rect x="2.5" y="11" width="6" height="2" fill="#3a6aa0"/><rect x="11" y="11.5" width="1.5" height="1.5" fill="#3c3"/></svg>
<div class="t" style="left:791.70px;top:527.80px;font-size:10.4px;color:#141414;font-weight:400;;-webkit-text-stroke:0.12px #141414">OS (C:)</div>
<svg class="a" style="left:755.50px;top:546.29px" width="6" height="8"><path d="M0.7 0.7 L4.8 4 L0.7 7.3Z" fill="none" stroke="#a6a6a6" stroke-width="1"/></svg>
<svg class="a" style="left:763.6px;top:543.19px" width="15" height="15" viewBox="0 0 15 15"><path d="M1 2 L6 2 L7 3.5 L14.5 3.5 L14.5 12.5 L1 12.5Z" fill="#e6c06a" stroke="#c9a04a" stroke-width="0.6"/><rect x="2.5" y="3" width="10" height="2" fill="#fff8e0"/><path d="M1 6 L14.5 6 L13.5 13 L2 13Z" fill="#5aa6e8" stroke="#3a7ac0" stroke-width="0.6"/><rect x="5.5" y="8.5" width="4.5" height="4.5" fill="#e6c06a"/></svg>
<div class="t" style="left:782.50px;top:546.49px;font-size:10.4px;color:#141414;font-weight:400;;-webkit-text-stroke:0.12px #141414">Libraries</div>
<svg class="a" style="left:755.50px;top:564.98px" width="6" height="8"><path d="M0.7 0.7 L4.8 4 L0.7 7.3Z" fill="none" stroke="#a6a6a6" stroke-width="1"/></svg>
<svg class="a" style="left:763.6px;top:561.88px" width="15" height="15" viewBox="0 0 15 15"><circle cx="5.5" cy="5.5" r="5" fill="#2a7ad0"/><path d="M2 3 C4 2 5 5 3 7 C2 8 4 9 5 10" fill="#3ab04a"/><path d="M6 1.5 C8 3 7 4 8.5 5" stroke="#3ab04a" stroke-width="1.5" fill="none"/><rect x="7" y="6" width="7.5" height="6" fill="#1a2ab8" stroke="#0a1a6a" stroke-width="0.7"/><rect x="8.5" y="7.5" width="2" height="3" fill="#5a8aff"/><path d="M10.5 12.5v1.5M8.5 14h4" stroke="#889" stroke-width="0.9"/></svg>
<div class="t" style="left:782.50px;top:565.18px;font-size:10.4px;color:#141414;font-weight:400;;-webkit-text-stroke:0.12px #141414">Network</div>
<svg class="a" style="left:755.50px;top:583.67px" width="6" height="8"><path d="M0.7 0.7 L4.8 4 L0.7 7.3Z" fill="none" stroke="#a6a6a6" stroke-width="1"/></svg>
<svg class="a" style="left:763.6px;top:580.57px" width="15" height="15" viewBox="0 0 15 15"><rect x="0.5" y="0.5" width="14" height="10.5" fill="#5aa0e0" stroke="#3a78b8" stroke-width="0.7"/><rect x="2" y="2" width="11" height="7.5" fill="#4a92d8"/><circle cx="5" cy="5" r="2" fill="#f0a040"/><path d="M8 4h4M8 6.5h4" stroke="#fff" stroke-width="1.2"/><ellipse cx="7.5" cy="12.5" rx="3.5" ry="2" fill="#d8d8d8" stroke="#888" stroke-width="0.5"/></svg>
<div class="t" style="left:782.50px;top:583.87px;font-size:10.4px;color:#141414;font-weight:400;;-webkit-text-stroke:0.12px #141414">Control Panel</div>
<svg class="a" style="left:764.6px;top:602.06px" width="13" height="13" viewBox="0 0 15 15"><path d="M1.5 1 L12.5 1 L11.5 13 L2.5 13Z" fill="#f0f6fc" stroke="#b8c4d0" stroke-width="0.8"/><circle cx="7" cy="6.5" r="2.2" fill="none" stroke="#4a90d8" stroke-width="1"/><rect x="2.5" y="11.5" width="9" height="1.5" fill="#c8d0d8"/></svg>
<div class="t" style="left:782.50px;top:602.56px;font-size:10.4px;color:#141414;font-weight:400;;-webkit-text-stroke:0.12px #141414">Recycle Bin</div>
<div class="a" style="left:747.00px;top:629.00px;width:91.60px;height:18.80px;background:linear-gradient(#f0f0f0,#e5e5e5);border:1px solid #acacac"></div>
<div class="t" style="left:755.00px;top:635.14px;font-size:9.4px;color:#141414;font-weight:400;;-webkit-text-stroke:0.12px #141414">Make New Folder</div>
<div class="a" style="left:898.20px;top:629.00px;width:64.80px;height:18.80px;background:linear-gradient(#f0f0f0,#e5e5e5);border:1px solid #3c8fd8"></div>
<div class="t" style="left:923.00px;top:634.97px;font-size:9.6px;color:#141414;font-weight:400;;-webkit-text-stroke:0.12px #141414">OK</div>
<div class="a" style="left:970.20px;top:629.00px;width:65.60px;height:18.80px;background:linear-gradient(#f0f0f0,#e5e5e5);border:1px solid #acacac"></div>
<div class="t" style="left:987.70px;top:635.23px;font-size:9.3px;color:#141414;font-weight:400;;-webkit-text-stroke:0.12px #141414">Cancel</div>
<svg class="a" style="left:1041.00px;top:649.00px" width="8" height="8"><g fill="#b0b0b0"><rect x="5" y="1" width="1.2" height="1.2"/><rect x="3" y="3" width="1.2" height="1.2"/><rect x="5" y="3" width="1.2" height="1.2"/><rect x="1" y="5" width="1.2" height="1.2"/><rect x="3" y="5" width="1.2" height="1.2"/><rect x="5" y="5" width="1.2" height="1.2"/></g></svg>
</body></html>
